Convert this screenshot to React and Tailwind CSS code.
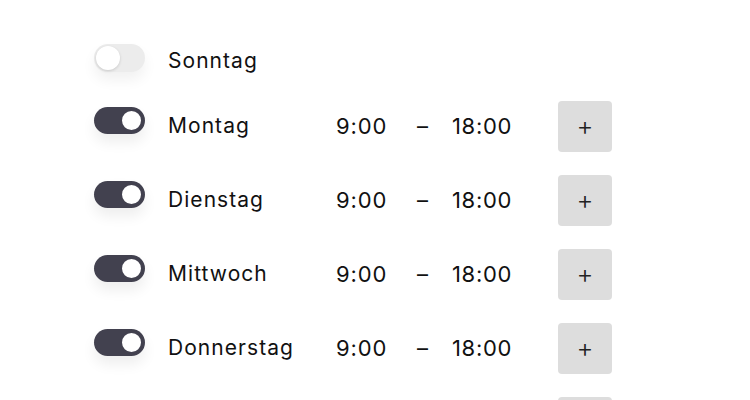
const days = [
  { name: "Sonntag", on: false },
  { name: "Montag", on: true, from: "9:00", to: "18:00" },
  { name: "Dienstag", on: true, from: "9:00", to: "18:00" },
  { name: "Mittwoch", on: true, from: "9:00", to: "18:00" },
  { name: "Donnerstag", on: true, from: "9:00", to: "18:00" },
  { name: "Freitag", on: true, from: "9:00", to: "18:00" },
];

const Toggle = ({ on }) => (
  <div
    className={
      on
        ? "relative w-[51px] h-[27px] rounded-full bg-[#42414f] shadow-[0_8px_14px_rgba(0,0,0,0.07)] mb-[13px] shrink-0"
        : "relative w-[51px] h-[28px] rounded-full bg-[#ececec] shadow-[0_8px_14px_rgba(0,0,0,0.06)] mb-[6px] shrink-0"
    }
  >
    <div
      className={
        on
          ? "absolute right-[2px] top-[2px] w-[23px] h-[23px] rounded-full bg-white border-2 border-[#42414f]"
          : "absolute left-[2px] top-[2px] w-[24px] h-[24px] rounded-full bg-white shadow-[0_1px_3px_rgba(0,0,0,0.15)]"
      }
    />
  </div>
);

export default function App() {
  return (
    <div
      className="w-[750px] h-[400px] overflow-hidden bg-white text-[#111] pl-[94px] pt-[39px]"
      style={{ fontFamily: "Inter, 'Liberation Sans', sans-serif" }}
    >
      <div className="flex flex-col gap-[23px]">
        {days.map((d, i) => (
          <div
            key={d.name}
            className={
              i === 0
                ? "flex items-center h-[44px] -mb-[5px]"
                : "flex items-center h-[51px]"
            }
          >
            <Toggle on={d.on} />
            <div
              className={
                i === 0
                  ? "ml-[23px] w-[168px] text-[21px] tracking-[0.05em]"
                  : "ml-[23px] w-[168px] text-[21px] tracking-[0.05em] mb-[2px]"
              }
            >
              {d.name}
            </div>
            {d.from && (
              <>
                <div className="w-[81px] text-[22px] tracking-[0.04em]">
                  {d.from}
                </div>
                <div className="w-[35px] text-[22px]">–</div>
                <div className="w-[106px] text-[22px] tracking-[0.03em]">
                  {d.to}
                </div>
                <button className="w-[54px] h-[51px] rounded-[4px] bg-[#dddddd] flex items-center justify-center text-[26px] font-light text-[#222] pb-[3px]">
                  +
                </button>
              </>
            )}
          </div>
        ))}
      </div>
    </div>
  );
}
